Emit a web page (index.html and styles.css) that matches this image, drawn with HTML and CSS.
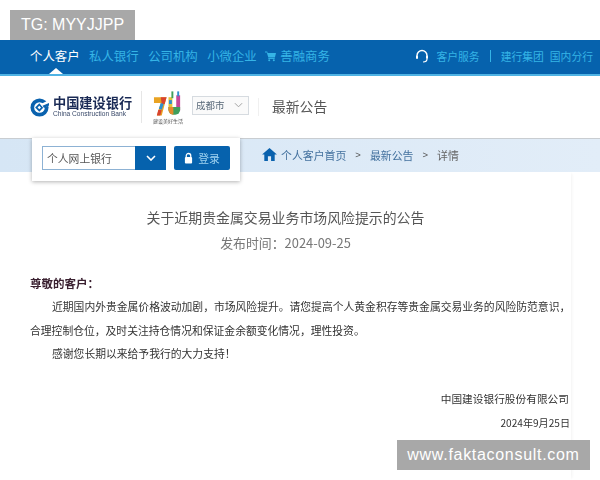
FILE: index.html
```html
<!DOCTYPE html>
<html lang="zh">
<head>
<meta charset="utf-8">
<title>关于近期贵金属交易业务市场风险提示的公告</title>
<link rel="stylesheet" href="styles.css">
</head>
<body>
<div class="page">
  <div class="top-space"></div>
  <nav class="nav">
    <div class="nav-left">
      <span class="nav-item active">个人客户</span>
      <span class="nav-item">私人银行</span>
      <span class="nav-item">公司机构</span>
      <span class="nav-item">小微企业</span>
      <span class="nav-item shop">
        <svg class="cart" viewBox="0 0 12 12"><path d="M0 1h2.400l.5 1.600H12l-1.200 5H3.600L2 2.200H0z" fill="#35b4e6"/><rect x="3.600" y="8.200" width="7" height="1" fill="#35b4e6"/><circle cx="4.600" cy="10.600" r="1.100" fill="#35b4e6"/><circle cx="9.600" cy="10.600" r="1.100" fill="#35b4e6"/></svg>善融商务</span>
    </div>
    <div class="nav-right">
      <svg class="headset" viewBox="0 0 14 14"><path d="M2 8V6.500a5 5 0 0 1 10 0V8" fill="none" stroke="#fff" stroke-width="1.400"/><rect x="1" y="6.500" width="2" height="3.500" rx="1" fill="#fff"/><rect x="11" y="6.500" width="2" height="3.500" rx="1" fill="#fff"/><path d="M12 10c0 2-2 3-4 3" fill="none" stroke="#fff" stroke-width="1.200"/></svg>
      <span class="nav-small">客户服务</span>
      <span class="nav-sep"></span>
      <span class="nav-small">建行集团</span>
      <span class="nav-small">国内分行</span>
    </div>
    <span class="nav-caret"></span>
  </nav>
  <header class="header">
    <div class="logo">
      <svg class="logo-mark" viewBox="0 0 20 20"><circle cx="10" cy="10" r="9.500" fill="#0a62ae"/><circle cx="10" cy="10" r="5.600" fill="#fff"/><path d="M9.800 5.400 14.200 10 9.800 14.600 5.400 10z" fill="#0a62ae"/><path d="M9.800 8.200 11.600 10 9.800 11.800 8 10z" fill="#fff"/><path d="M11 6.500 20 2v5.500l-6 3z" fill="#fff"/><path d="M13.200 8.200 20 5.200v2.600l-5.200 2.800z" fill="#0a62ae"/></svg>
      <div class="logo-text">
        <span class="logo-cn">中国建设银行</span>
        <span class="logo-en">China Construction Bank</span>
      </div>
    </div>
    <span class="vline"></span>
    <div class="seventy">
      <svg class="seventy-mark" viewBox="0 0 32 27"><path d="M1 7h13l-5 19H4l4-13H1z" fill="#e9a323"/><path d="M8 7h6l-2 7H9z" fill="#d8432f"/><path d="M6 19l2-6 3 1-2 6z" fill="#2e8fcf"/><path d="M4 26l1.500-6 3.500.5-1.500 5.500z" fill="#d8432f"/><rect x="16" y="7" width="4" height="14" fill="#e3c23a"/><rect x="24" y="5" width="4" height="16" fill="#c4489a"/><rect x="19" y="1" width="2" height="7" fill="#3f9f5c"/><rect x="25" y="1" width="2" height="5" fill="#2e8fcf"/><path d="M16 17h12v3a5 5 0 0 1-5 5h-2a5 5 0 0 1-5-5z" fill="#3f9f5c"/><path d="M16 17h5v8a5 5 0 0 1-5-5z" fill="#e58a2b"/><rect x="16.500" y="10" width="3" height="4" fill="#2e8fcf"/></svg>
      <span class="seventy-txt">建设美好生活</span>
    </div>
    <div class="city"><span>成都市</span>
      <svg class="city-chev" viewBox="0 0 10 6"><path d="M1 1l4 4 4-4" fill="none" stroke="#999" stroke-width="1"/></svg>
    </div>
    <span class="vline short"></span>
    <h2 class="section-title">最新公告</h2>
  </header>
  <div class="crumbs">
    <svg class="home" viewBox="0 0 16 14"><path d="M8 0 16 7h-2.400v7H9.700V9H6.300v5H2.400V7H0z" fill="#0a62ae"/></svg>
    <span class="crumb">个人客户首页</span>
    <span class="crumb-sep">&gt;</span>
    <span class="crumb">最新公告</span>
    <span class="crumb-sep">&gt;</span>
    <span class="crumb-cur">详情</span>
  </div>
  <div class="login">
    <div class="login-select">
      <span class="login-label">个人网上银行</span>
      <span class="login-drop"><svg viewBox="0 0 10 6"><path d="M1 1l4 4 4-4" fill="none" stroke="#fff" stroke-width="1.600"/></svg></span>
    </div>
    <button class="login-btn"><svg viewBox="0 0 10 12"><path d="M2.500 5V3.500a2.500 2.500 0 0 1 5 0V5" fill="none" stroke="#fff" stroke-width="1.400"/><rect x="1" y="5" width="8" height="7" rx="1" fill="#fff"/></svg>登录</button>
  </div>
  <main class="article">
    <h1 class="title">关于近期贵金属交易业务市场风险提示的公告</h1>
    <p class="date">发布时间：2024-09-25</p>
    <p class="greet">尊敬的客户：</p>
    <p class="para">近期国内外贵金属价格波动加剧，市场风险提升。请您提高个人黄金积存等贵金属交易业务的风险防范意识，</p>
    <p class="para cont">合理控制仓位，及时关注持仓情况和保证金余额变化情况，理性投资。</p>
    <p class="para">感谢您长期以来给予我行的大力支持！</p>
    <p class="sign">中国建设银行股份有限公司</p>
    <p class="sign-date">2024年9月25日</p>
  </main>
</div>
<div class="mark mark-tg">TG: MYYJJPP</div>
<div class="mark mark-site">www.faktaconsult.com</div>
</body>
</html>
```
FILE: styles.css
```css
* { box-sizing: border-box; }
html, body { margin: 0; padding: 0; background: #fff; }
body { width: 600px; height: 480px; overflow: hidden; position: relative; font-family: "Noto Sans CJK SC", "Liberation Sans", sans-serif; }
.page { filter: blur(0.45px); }
.top-space { height: 40px; }
.nav { position: relative; height: 36px; background: #0662ad; border-bottom: 2px solid #4fb3e4; display: flex; justify-content: space-between; align-items: center; padding: 0 7px 2px 30px; }
.nav-left { display: flex; gap: 9.500px; align-items: center; }
.nav-item { font-size: 12.400px; color: #35b4e6; line-height: 16px; display: flex; align-items: center; white-space: nowrap; }
.nav-item.active { color: #fff; }
.shop { margin-left: -1px; }
.cart { width: 11px; height: 12px; margin-right: 4px; }
.nav-right { display: flex; align-items: center; }
.headset { width: 14px; height: 14px; margin-right: 7px; }
.nav-small { font-size: 10.800px; color: #35b4e6; margin-right: 6px; white-space: nowrap; }
.nav-small:last-child { margin-right: 0; }
.nav-sep { width: 1px; height: 12px; background: #35b4e6; margin: 0 10px 0 4px; }
.nav-caret { position: absolute; left: 49px; bottom: 0; width: 0; height: 0; border-left: 7px solid transparent; border-right: 7px solid transparent; border-bottom: 6px solid #fff; }
.header { height: 62px; display: flex; align-items: center; padding: 0 0 0 30px; }
.logo { display: flex; align-items: center; gap: 4px; width: 102px; }
.logo-mark { width: 19px; height: 19px; flex: none; }
.logo-text { display: flex; flex-direction: column; padding-top: 1px; }
.logo-cn { font-size: 13.200px; line-height: 12px; font-weight: 700; color: #1a2a55; white-space: nowrap; }
.logo-en { font-size: 6.600px; line-height: 8px; margin-top: 1px; color: #3a4a6a; white-space: nowrap; font-family: "Liberation Sans", sans-serif; }
.vline { width: 1px; height: 32px; background: #e6e6e6; margin-left: 9px; }
.vline.short { height: 18px; margin-left: 9px; background: #f0f0f0; }
.seventy { display: flex; flex-direction: column; align-items: center; width: 36px; margin-left: 8px; }
.seventy-mark { width: 31px; height: 27px; }
.seventy-txt { font-size: 5px; line-height: 7px; color: #555; white-space: nowrap; }
.city { width: 57px; height: 19px; margin-left: 6px; margin-top: -4px; border: 1px solid #d6dbe0; background: #fafafa; display: flex; align-items: center; justify-content: space-between; padding: 0 5px 0 3px; font-size: 9.500px; color: #5a6a7a; }
.city-chev { width: 9px; height: 6px; }
.section-title { margin: -2px 0 0 13px; font-size: 13.800px; line-height: 20px; font-weight: 400; color: #555; }
.crumbs { height: 34px; background: linear-gradient(90deg, #d6e6f5, #e2edf8); border-top: 1px solid #c9cdd1; display: flex; align-items: center; padding: 0 0 2px 262px; }
.home { width: 15px; height: 13px; margin-right: 4px; }
.crumb { font-size: 10.900px; color: #44729f; white-space: nowrap; }
.crumb-sep { font-size: 9.500px; color: #555; margin: 0 9px; font-family: "Liberation Sans", sans-serif; }
.crumb-cur { font-size: 10.900px; color: #666; }
.login { position: absolute; left: 32px; top: 138px; width: 208px; height: 43px; background: #fff; box-shadow: 0 1px 4px rgba(0,0,0,.3); display: flex; align-items: flex-start; gap: 8px; padding: 8px 0 0 10px; filter: blur(0.45px); }
.login-select { width: 124px; height: 24px; border: 1px solid #8db2d4; display: flex; justify-content: space-between; align-items: center; }
.login-label { font-size: 10.800px; color: #555; padding-left: 4px; }
.login-drop { width: 31px; height: 24px; margin: -1px -1px -1px 0; background: #0662ad; display: flex; align-items: center; justify-content: center; }
.login-drop svg { width: 10px; height: 6px; }
.login-btn { width: 56px; height: 24px; border: 0; border-radius: 2px; background: #0662ad; color: #9fd3f0; font: 10.800px "Noto Sans CJK SC", sans-serif; display: flex; align-items: center; justify-content: center; gap: 5px; padding: 0; }
.login-btn svg { width: 9px; height: 12px; }
.article { position: relative; width: 571px; height: 308px; box-shadow: 3px 0 3px -2px rgba(0,0,0,.05); }
.title { margin: 0; padding-top: 36px; font-size: 13.900px; line-height: 18px; font-weight: 400; color: #555; text-align: center; }
.date { margin: 8px 0 0; font-size: 12.900px; line-height: 18px; color: #777; text-align: center; }
.greet { margin: 23px 0 1px; padding-left: 30px; font-size: 11.500px; line-height: 16px; font-weight: 700; color: #3a2030; }
.para { margin: 8px 0 0; padding-left: 30px; font-size: 10.800px; line-height: 15.500px; color: #333; text-indent: 22px; white-space: nowrap; }
.para.cont { text-indent: 0; }
.sign { margin: 29px 2px 0 0; font-size: 10.700px; line-height: 16px; color: #333; text-align: right; }
.sign-date { margin: 8px 1px 0 0; font-size: 10.100px; line-height: 16px; color: #333; text-align: right; }
.mark { position: absolute; background: #a8a8a8; color: #fff; font-family: "Liberation Sans", sans-serif; display: flex; align-items: center; justify-content: center; height: 30px; }
.mark-tg { left: 10px; top: 10px; width: 125px; font-size: 16px; }
.mark-site { left: 397px; top: 440px; width: 193px; font-size: 16px; letter-spacing: .7px; }
```
